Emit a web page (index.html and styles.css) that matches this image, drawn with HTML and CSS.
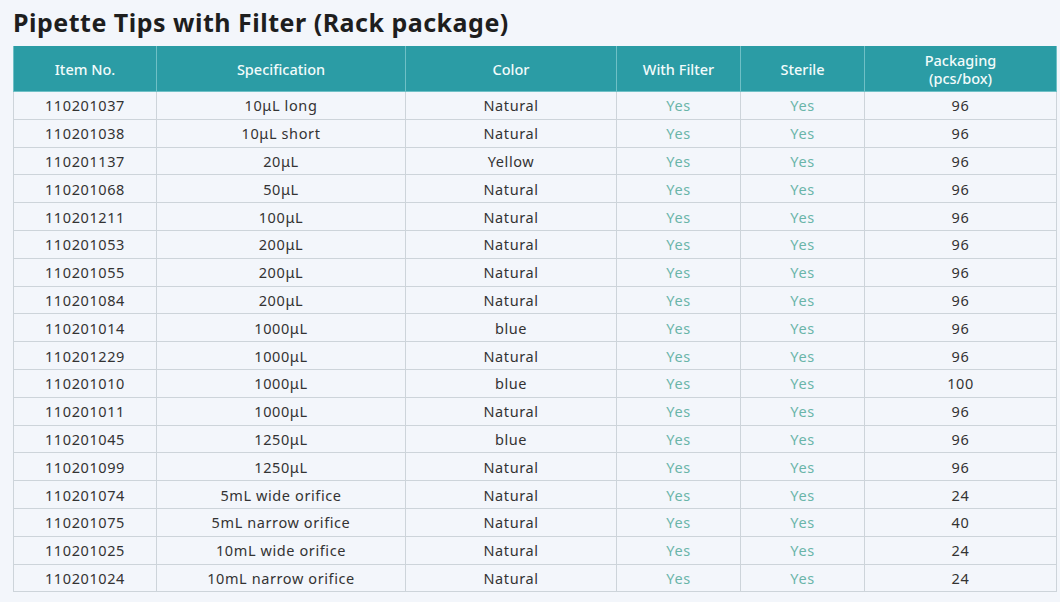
FILE: index.html
```html
<!DOCTYPE html>
<html>
<head>
<meta charset="utf-8">
<link rel="stylesheet" href="styles.css">
</head>
<body>
<h1 class="title">Pipette Tips with Filter (Rack package)</h1>
<table class="spec">
<colgroup>
<col class="c1"><col class="c2"><col class="c3"><col class="c4"><col class="c5"><col class="c6">
</colgroup>
<thead>
<tr><th>Item No.</th><th>Specification</th><th>Color</th><th>With Filter</th><th>Sterile</th><th>Packaging<br>(pcs/box)</th></tr>
</thead>
<tbody>
<tr><td>110201037</td><td>10μL long</td><td>Natural</td><td class="yes">Yes</td><td class="yes">Yes</td><td>96</td></tr>
<tr><td>110201038</td><td>10μL short</td><td>Natural</td><td class="yes">Yes</td><td class="yes">Yes</td><td>96</td></tr>
<tr><td>110201137</td><td>20μL</td><td>Yellow</td><td class="yes">Yes</td><td class="yes">Yes</td><td>96</td></tr>
<tr><td>110201068</td><td>50μL</td><td>Natural</td><td class="yes">Yes</td><td class="yes">Yes</td><td>96</td></tr>
<tr><td>110201211</td><td>100μL</td><td>Natural</td><td class="yes">Yes</td><td class="yes">Yes</td><td>96</td></tr>
<tr><td>110201053</td><td>200μL</td><td>Natural</td><td class="yes">Yes</td><td class="yes">Yes</td><td>96</td></tr>
<tr><td>110201055</td><td>200μL</td><td>Natural</td><td class="yes">Yes</td><td class="yes">Yes</td><td>96</td></tr>
<tr><td>110201084</td><td>200μL</td><td>Natural</td><td class="yes">Yes</td><td class="yes">Yes</td><td>96</td></tr>
<tr><td>110201014</td><td>1000μL</td><td>blue</td><td class="yes">Yes</td><td class="yes">Yes</td><td>96</td></tr>
<tr><td>110201229</td><td>1000μL</td><td>Natural</td><td class="yes">Yes</td><td class="yes">Yes</td><td>96</td></tr>
<tr><td>110201010</td><td>1000μL</td><td>blue</td><td class="yes">Yes</td><td class="yes">Yes</td><td>100</td></tr>
<tr><td>110201011</td><td>1000μL</td><td>Natural</td><td class="yes">Yes</td><td class="yes">Yes</td><td>96</td></tr>
<tr><td>110201045</td><td>1250μL</td><td>blue</td><td class="yes">Yes</td><td class="yes">Yes</td><td>96</td></tr>
<tr><td>110201099</td><td>1250μL</td><td>Natural</td><td class="yes">Yes</td><td class="yes">Yes</td><td>96</td></tr>
<tr><td>110201074</td><td>5mL wide orifice</td><td>Natural</td><td class="yes">Yes</td><td class="yes">Yes</td><td>24</td></tr>
<tr><td>110201075</td><td>5mL narrow orifice</td><td>Natural</td><td class="yes">Yes</td><td class="yes">Yes</td><td>40</td></tr>
<tr><td>110201025</td><td>10mL wide orifice</td><td>Natural</td><td class="yes">Yes</td><td class="yes">Yes</td><td>24</td></tr>
<tr><td>110201024</td><td>10mL narrow orifice</td><td>Natural</td><td class="yes">Yes</td><td class="yes">Yes</td><td>24</td></tr>
</tbody>
</table>
</body>
</html>
```

FILE: styles.css
```css
html, body {
  margin: 0;
  padding: 0;
  background: #f3f6fb;
}
body {
  padding: 0 4px 0 13px;
  font-family: "Noto Sans", "DejaVu Sans", sans-serif;
  color: #2e2e2e;
}
.title {
  margin: 0;
  height: 46px;
  padding-top: 4px;
  box-sizing: border-box;
  font-size: 25px;
  font-weight: 700;
  letter-spacing: 0.5px;
  color: #1e1e1e;
  line-height: 36px;
}
.spec {
  border-collapse: collapse;
  width: 1043px;
  table-layout: fixed;
}
.c1 { width: 143px; }
.c2 { width: 249px; }
.c3 { width: 211px; }
.c4 { width: 124px; }
.c5 { width: 124px; }
.c6 { width: 192px; }
.spec th {
  background: #2b9ca5;
  color: #f2fbfb;
  font-weight: 500;
  font-size: 14.5px;
  line-height: 18px;
  height: 45px;
  padding: 0;
  border: 1px solid #6fc0c6;
  border-top: none;
}
.spec td {
  height: 27.8px;
  padding: 0;
  text-align: center;
  font-size: 14.5px;
  letter-spacing: 0.6px;
  border: 1px solid #cdd4da;
  box-sizing: border-box;
  color: #333;
}
.spec td.yes {
  color: #6ab5a9;
}
```
